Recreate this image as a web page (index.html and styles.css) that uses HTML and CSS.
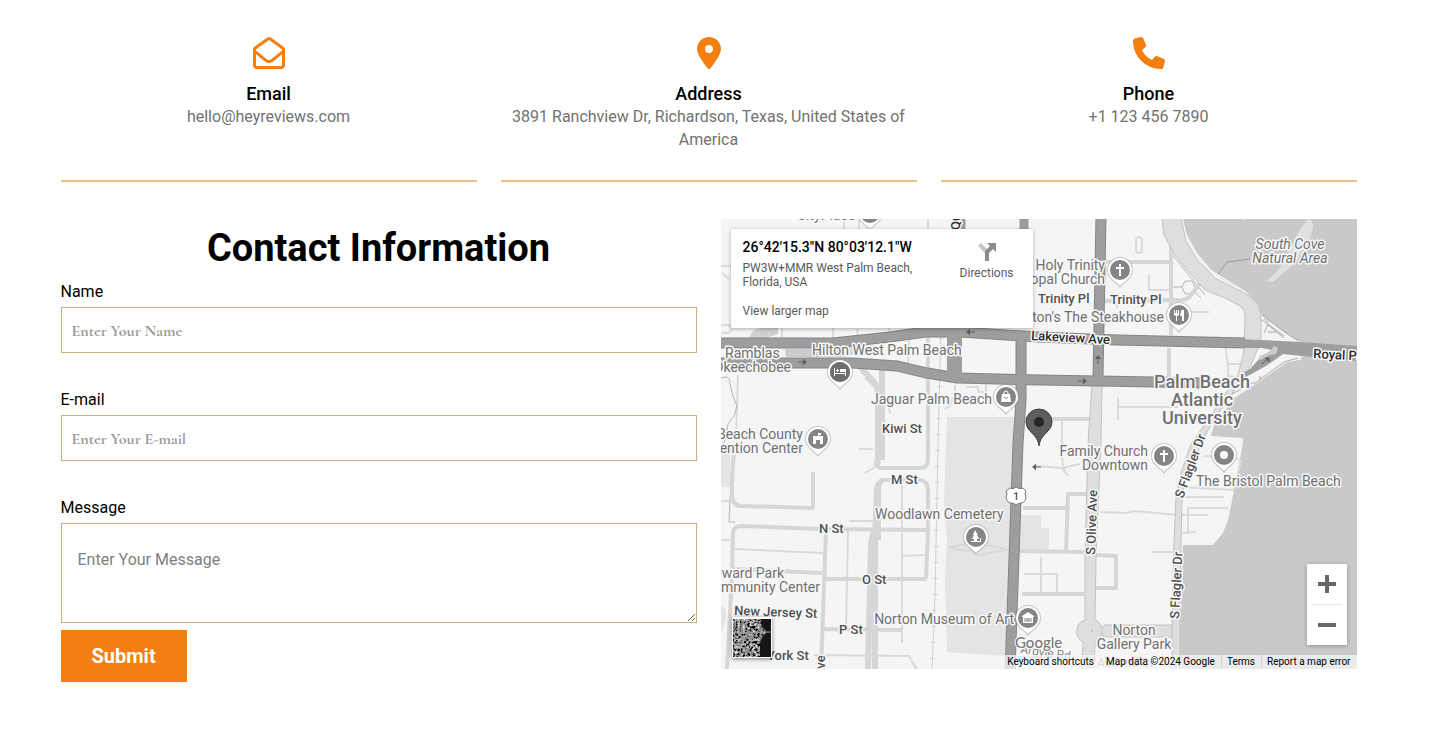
FILE: index.html
```html
<!DOCTYPE html>
<html lang="en">
<head>
<meta charset="utf-8">
<meta name="viewport" content="width=device-width, initial-scale=1">
<title>Contact</title>
<link rel="stylesheet" href="styles.css">
</head>
<body>
<main class="container">
  <section class="info">
    <article class="info-card">
      <svg class="info-icon" viewBox="0 0 512 512" aria-hidden="true"><path d="M255.4 48.2c.2-.1 .4-.2 .6-.2s.4 .1 .6 .2L460.6 194c2.1 1.5 3.4 3.9 3.4 6.5v13.6L291.5 355.7c-20.7 17-50.4 17-71.1 0L48 214.1V200.5c0-2.6 1.2-5 3.4-6.5L255.4 48.2zM48 276.2L190 392.8c38.4 31.5 93.7 31.5 132 0L464 276.2V456c0 4.4-3.6 8-8 8H56c-4.4 0-8-3.6-8-8V276.2zM256 0c-10.2 0-20.2 3.2-28.5 9.1L23.5 154.9C8.7 165.4 0 182.4 0 200.5V456c0 30.9 25.1 56 56 56H456c30.9 0 56-25.1 56-56V200.5c0-18.1-8.7-35.1-23.4-45.6L284.5 9.1C276.2 3.2 266.2 0 256 0z"/></svg>
      <h3>Email</h3>
      <p>hello@heyreviews.com</p>
    </article>
    <article class="info-card">
      <svg class="info-icon" viewBox="-64 0 512 512" aria-hidden="true"><path d="M215.7 499.2C267 435 384 279.4 384 192C384 86 298 0 192 0S0 86 0 192c0 87.4 117 243 168.3 307.2c12.3 15.3 35.1 15.3 47.4 0zM192 128a64 64 0 1 1 0 128 64 64 0 1 1 0-128z"/></svg>
      <h3>Address</h3>
      <p>3891 Ranchview Dr, Richardson, Texas, United States of America</p>
    </article>
    <article class="info-card">
      <svg class="info-icon" viewBox="0 0 512 512" aria-hidden="true"><path d="M164.9 24.6c-7.7-18.6-28-28.5-47.4-23.2l-88 24C12.1 30.2 0 46 0 64C0 311.4 200.6 512 448 512c18 0 33.8-12.1 38.6-29.5l24-88c5.3-19.4-4.6-39.7-23.2-47.4l-96-40c-16.3-6.8-35.2-2.1-46.3 11.6L304.7 368C234.3 334.7 177.3 277.7 144 207.3L193.3 167c13.7-11.2 18.4-30 11.6-46.3l-40-96z"/></svg>
      <h3>Phone</h3>
      <p>+1 123 456 7890</p>
    </article>
  </section>

  <section class="contact">
    <form class="form">
      <h2>Contact Information</h2>
      <div class="field">
        <label for="name">Name</label>
        <input id="name" type="text" placeholder="Enter Your Name">
      </div>
      <div class="field">
        <label for="email">E-mail</label>
        <input id="email" type="email" placeholder="Enter Your E-mail">
      </div>
      <div class="field">
        <label for="message">Message</label>
        <textarea id="message" placeholder="Enter Your Message"></textarea>
      </div>
      <button class="submit" type="submit">Submit</button>
    </form>

    <div class="map">
      <svg class="map-canvas" viewBox="721 219 636 450" preserveAspectRatio="xMidYMid slice" role="img" aria-label="Map of West Palm Beach">
        <defs>
          <g id="pin">
            <path class="pin-shadow" d="M0 18C-3 13-13 9-13 0A13 13 0 0 1 13 0C13 9 3 13 0 18Z"/>
            <path fill="#fff" d="M0 16C-3 12-12 8-12 0A12 12 0 0 1 12 0C12 8 3 12 0 16Z"/>
            <circle r="10" fill="#858585"/>
          </g>
        </defs>
        <rect x="721" y="219" width="636" height="450" fill="#f5f5f5"/>

        <!-- parks and blocks -->
        <g fill="#e4e4e4">
          <path d="M947 417H1016L1014 500 1007 656 947 652 945 580 947 540 944 500Z"/>
          <path d="M721 452H730V487H721ZM721 605q6 2 5 12t-5 14ZM1020 515h8v13h21v22h-30ZM1027 515h14v14h-14Z"/>
          <path fill="#d0d0d0" d="M750 336q2-6 10-8h18v6l-12 4h-16Z"/>
        </g>

        <!-- water -->
        <path fill="#c9c9c9" d="M1181 219L1185 233 1196 255 1208 270 1225 281 1245 293 1256 306 1263 316 1285 333 1301 342 1357 348V219Z"/>
        <path fill="#c9c9c9" d="M1357 346V669H1180L1180 630 1182 593 1183 545H1213L1223 533 1228 520 1235 486 1243 443V438L1211 436 1214 425 1236 396 1256 380 1286 361 1301 357Z"/>
        <path fill="#e0e0e0" d="M1308 219q6 2 5 8l-3 13q-12 20-16 24l-21 18-7-1q14-10 18-21l14-27Z"/>
        <path fill="#e0e0e0" d="M1246 218l-2 3-3-3Z"/>
        <path fill="none" stroke="#f3f3f3" stroke-width="2" d="M1182 219L1186 235 1197 255 1210 270 1227 281 1245 292 1258 306"/>
        <path fill="none" stroke="#999" d="M1218 274L1227 262 1250 259"/>

        <!-- local streets -->
        <g class="street thin">
          <path d="M721 266h11M722 273l7 6M721 325h8q4 4 0 8h-8M782 328v12M833 328v12M857 329l1 8M889 328l1 5M859 219v12M844 219v12M928 219v10M909 337l-1 30M865 378l22 20 3 15"/>
          <path d="M955 385v8M966 387h12v5h8v-9M945 409l5-3 3-9M738 375l-2 60"/>
          <path d="M902 485v158M848 530l-2 100M735 549l88 4M849 521h26M859 449h14M865 473l12-7M902 556l25-1M814 655l95 1q3 7 8 13M721 501h9M721 540h9"/>
          <path d="M1118 398v22M1118 407h60M1117 308v-6h26M1149 275v15h20M1136 241q0-4 3-4t3 4v8q0 4-3 4t-3-4ZM1062 420v30q0 20 4 20M1035 466l27 2 6 8M1062 468l18-4M1100 512l26 1 8-2 45 4M1152 552h23M1185 497h39M1187 508h41M1188 508v24M1182 515h26M1182 533l14-1M1024 574h33v19M1041 557v37M1177 312h32M1226 348l3 32M1228 364h12M1227 376l10 1"/>
          <path d="M1208 288l10-4M1210 340l6-3 5 3M1182 487l52 3M1204 456l30 1 7 4-7 28"/>
        </g>
        <g class="street outline">
          <path d="M732 458L729 522H735M721 378q9-4 9 6 2 12 7 22l-3 10-6 8-2 14-4 8"/>
          <path d="M1173 287h9M1182 287l3-6 7 0 3 6-3 7h-7ZM1194 291l7 7M1171 253l34 42"/>
        </g>
        <g class="street mid">
          <path d="M734 455Q732 470 732 494 732 505 740 506L813 508V472M877 460q-1 8 6 8h38q7 0 7-9V328"/>
          <path d="M1171 219v116M1169 348v32M1104 262h67M1103 301l74-1q10 1 14-5l9-11"/>
          <path d="M727 669L732 575 733 532Q734 526 742 526L819 529 926 530M879 540V484l3-4h38q8 1 8 10v40l-2 49M734 569l88 4M826 529l-5 140M824 579H926M824 629l78 1"/>
          <path d="M1023 508h44M1095 494H1068L1066 550M1018 551l66 1M1096 555l20 1v32h-20M1022 594h62M1024 419h66"/>
        </g>
        <path class="avenue" d="M1104 625h68v12h-68l-4-6Z"/>
        <g class="street wide">
          <path d="M856 362l14 16q8 7 8 16v62q0 5-2 10M882 370v90M875 669V540l2-50q0-6 5-9M868 669l3-125q1-10 6-18"/>
          <path d="M785 352h95M848 348h20"/>
        </g>
        <path fill="none" stroke="#d8d8d8" stroke-width="2" d="M951 547q25-6 57 3-20 2-28 6-4 0-9-6-10 2-20-3Z"/>

        <!-- railway -->
        <path class="rail" d="M941 328L938 444 935 596 932 669"/>
        <path class="rail ties" d="M941 338L938 444 935 596 932 669"/>

        <!-- S Flagler Dr and S Olive Ave -->
        <path class="avenue" d="M1162 218L1164 235 1175 255 1188 271 1205 290 1225 298 1240 306Q1245 309 1245 318L1244 351 1238 375 1218 405 1191 444 1180 476 1176 498 1174 543 1172 630V670H1180V630L1181 543 1182 498 1185 480 1201 444 1213 421 1233 393 1251 365 1261 341V318Q1261 308 1255 301 1250 295 1238 290L1215 278 1198 261 1186 241 1181 218Z"/>
        <path class="avenue" d="M1092 384H1102L1101 443 1096 556 1095 620A12 12 0 0 1 1095 642L1094 670H1082L1083 642A12 12 0 0 1 1085 620L1085 556 1088 443Z"/>
        <circle cx="1092" cy="631" r="1" fill="#bbb"/>

        <!-- bridge ramps -->
        <path fill="#f3f3f3" d="M1262 316L1285 333 1301 343 1285 341H1262Z"/>
        <g fill="none" stroke="#f3f3f3" stroke-width="3">
          <path d="M1301 358l-15 3-27 19-18 12M1292 357l-38 25-19 14"/>
        </g>
        <path fill="none" stroke="#aaa" d="M1262 315l24 18 13 8M1262 320l22 18M1264 333l4-9 16 12M1269 323l-5-4M1268 332h8M1254 384l30-22 14-4M1260 376v4M1232 394l22-12"/>

        <!-- arterial roads -->
        <g class="artery-edge">
          <path d="M721 343H833L890 337 925 332 960 332 1038 337 1118 340 1245 343"/>
          <path d="M721 363H853L897 366 927 373 957 378 1040 380 1155 382 1201 383"/>
          <path d="M1021 332V400L1018 443 1010 672M1101 216L1098 378"/>
        </g>
        <g class="artery">
          <path d="M721 343H833L890 337 925 332 960 332 1038 337 1118 340 1245 343"/>
          <path d="M721 363H853L897 366 927 373 957 378 1040 380 1155 382 1201 383"/>
          <path d="M1021 332V400L1018 443 1010 672M1101 216L1098 378"/>
          <path d="M961 216v14M1024 216v14"/>
        </g>
        <path fill="#9e9e9e" d="M947 330H962V380H947ZM1240 339L1301 342 1357 346V361L1301 356 1283 354 1266 366 1244 378Q1240 380 1243 373L1250 369 1260 358 1272 350 1262 348 1240 348Z"/>
        <path fill="#ccc" d="M1259 356l11-4 4-6 4 2-2 6-6 1-10 5ZM786 349h60v8h-60Z"/>
        <path class="arrows" d="M798 362h8M803 359l3 3-3 3M975 332h-8M970 329l-3 3 3 3M1078 381h8M1083 378l3 3-3 3M1098 364v-8M1095 359l3-3 3 3M1262 364l7-6M1265 358h4v4M1041 467h-8M1036 464l-3 3 3 3"/>
        <path fill="#606060" d="M803 359l4 3-4 3ZM970 329l-4 3 4 3ZM1083 378l4 3-4 3ZM1095 359l3-4 3 4ZM1265 358h4v4ZM1036 464l-4 3 4 3Z"/>

        <!-- street names -->
        <g class="label road">
          <text x="882" y="433">Kiwi St</text>
          <text x="891" y="484">M St</text>
          <text x="819" y="533">N St</text>
          <text x="862" y="584">O St</text>
          <text x="839" y="634">P St</text>
          <text transform="translate(734 615) rotate(2)">New Jersey St</text>
          <text x="767" y="660">York St</text>
          <text x="1038" y="303">Trinity Pl</text>
          <text x="1110" y="304">Trinity Pl</text>
          <text transform="translate(825 677) rotate(-90)">Ave</text>
          <text transform="translate(1095 555) rotate(-88)">S Olive Ave</text>
          <text transform="translate(1179 619) rotate(-87)">S Flagler Dr</text>
          <text transform="translate(1183 499) rotate(-70)">S Flagler Dr</text>
          <text transform="translate(1020 653) rotate(8)" class="faint">Argyle Rd</text>
          <text x="1097" y="667" class="faint">Almond Ct</text>
          <g class="strong">
            <text transform="translate(1031 340) rotate(3)">Lakeview Ave</text>
            <text transform="translate(1313 358) rotate(3)">Royal Park Brg</text>
            <text transform="translate(960 230) rotate(-90)">Quadrille</text>
          </g>
        </g>

        <!-- places -->
        <g class="label place">
          <text x="797" y="220">CityPlace</text>
          <text x="812" y="355">Hilton West Palm Beach</text>
          <text x="725" y="358">Ramblas</text>
          <text x="791" y="372" class="end">Okeechobee</text>
          <text x="992" y="404" class="end">Jaguar Palm Beach</text>
          <text x="803" y="439" class="end">Palm Beach County</text>
          <text x="803" y="453" class="end">Convention Center</text>
          <text x="875" y="519">Woodlawn Cemetery</text>
          <text x="784" y="578" class="end">Howard Park</text>
          <text x="820" y="592" class="end">Community Center</text>
          <text x="1014" y="624" class="end">Norton Museum of Art</text>
          <text x="1105" y="270" class="end">Holy Trinity</text>
          <text x="1105" y="284" class="end">Episcopal Church</text>
          <text x="1164" y="322" class="end">Houston's The Steakhouse</text>
          <text x="1148" y="456" class="end">Family Church</text>
          <text x="1148" y="470" class="end">Downtown</text>
          <text x="1196" y="486">The Bristol Palm Beach</text>
          <text x="1134" y="635" class="mid-text">Norton</text>
          <text x="1134" y="649" class="mid-text">Gallery Park</text>
          <g class="italic">
            <text x="1290" y="249" class="mid-text">South Cove</text>
            <text x="1290" y="263" class="mid-text">Natural Area</text>
          </g>
          <g class="campus">
            <text x="1202" y="388" class="mid-text">Palm Beach</text>
            <text x="1202" y="406" class="mid-text">Atlantic</text>
            <text x="1202" y="424" class="mid-text">University</text>
          </g>
        </g>

        <!-- place pins -->
        <use href="#pin" x="870" y="213"/>
        <g transform="translate(840 372)"><use href="#pin"/><circle r="10" fill="#6e6e6e"/><path fill="#fff" d="M-6-4h1v5H5v-3H0v-1h6v7H5V2H-5v2h-1ZM0-3h5q1 0 1 2v1H0ZM-3-3h1v1h1v1h-1v1h-1v-1h-1v-1h1Z"/></g>
        <g transform="translate(1006 397)"><use href="#pin"/><path fill="none" stroke="#fff" d="M-2-2v-2a2 2 0 0 1 4 0v2"/><path fill="#fff" d="M-4-3h8L5 5H-5Z"/><path d="M-2 0q2 3 4 0" fill="none" stroke="#858585"/></g>
        <g transform="translate(818 439)"><use href="#pin"/><path fill="#fff" d="M0-6h3v2H1v1h4v8H2V1h-4v4h-3v-8h5Z"/></g>
        <g transform="translate(976 537)"><use href="#pin"/><path fill="#fff" d="M-1-7l3 5H1l2 4H1v2h3V1h1v4H-5V4h3V2h-2l2-4h-1Z"/></g>
        <g transform="translate(1028 618)"><use href="#pin"/><path fill="#fff" d="M0-6l6 4v1H5v6H-5v-6h-1v-1Z"/><path fill="none" stroke="#858585" d="M-3 4V0M3 4V0M-1 4V0M1 4V0M-1 2H1"/></g>
        <g transform="translate(1120 270)"><use href="#pin"/><path fill="#fff" d="M-1-6h2v3h3v2H1v7h-2v-7h-3v-2h3Z"/></g>
        <g transform="translate(1179 315)"><use href="#pin"/><path fill="#fff" d="M-5-5h1v3h1v-3h1v3h1v-3h1v5l-2 1v5h-1V1l-2-1ZM2-4q1-2 3-1V6H3V1H1Z"/></g>
        <g transform="translate(1164 456)"><use href="#pin"/><path fill="#fff" d="M-1-6h2v3h3v2H1v7h-2v-7h-3v-2h3Z"/></g>
        <g transform="translate(1224 455)"><use href="#pin"/><circle r="4" fill="#fff"/></g>

        <!-- US-1 shield -->
        <path fill="#fff" stroke="#777" d="M1010 488q3 2 6-1 4 3 7 1l3 3q-2 3 0 6-1 6-5 6-3 0-5 2-2-2-5-2-4 0-5-6 2-3 0-6Z"/>
        <text class="shield" x="1016" y="500">1</text>

        <!-- selected location -->
        <path fill="#5e5e5e" stroke="#404040" d="M1039 446C1038 434 1026 432 1026 422A13 13 0 0 1 1052 422C1052 432 1040 434 1039 446Z"/>
        <circle cx="1039" cy="422" r="5" fill="#262626"/>
        <text class="google" x="1015" y="648">Google</text>
      </svg>

      <div class="place-card">
        <div class="place-info">
          <strong>26°42'15.3"N 80°03'12.1"W</strong>
          <address>PW3W+MMR West Palm Beach, Florida, USA</address>
          <a href="#">View larger map</a>
        </div>
        <a class="directions" href="#">
          <svg viewBox="0 0 20 20" aria-hidden="true"><path fill="#c6c6c6" d="M1 4L4 1 11 8V13L9 12Z"/><path fill="#8c8c8c" d="M8 19V11Q8 9 9 8L13 4 10 1H19V10L16 7 12 11V19Z"/></svg>
          Directions
        </a>
      </div>

      <button class="satellite" type="button" aria-label="Show satellite imagery">
        <svg viewBox="0 0 38 38" aria-hidden="true">
          <filter id="grain" x="0" y="0" width="100%" height="100%">
            <feTurbulence type="fractalNoise" baseFrequency=".4" numOctaves="4" seed="6"/>
            <feColorMatrix values="1.400 .8 0 0 -.85  1.400 .8 0 0 -.85  1.400 .8 0 0 -.85  0 0 0 0 1"/>
          </filter>
          <rect width="38" height="38" filter="url(#grain)"/>
          <path fill="#151515" d="M28 0L29 8 34 13 29 18 27 24V38H38V0Z"/>
          <path fill="none" stroke="#999" d="M0 14l38-1M9 0L7 38"/>
        </svg>
      </button>

      <div class="zoom">
        <button type="button" aria-label="Zoom in"><svg viewBox="0 0 18 18"><path d="M7 0h4v7h7v4h-7v7H7v-7H0V7h7Z"/></svg></button>
        <button type="button" aria-label="Zoom out"><svg viewBox="0 0 18 18"><path d="M0 7h18v4H0Z"/></svg></button>
      </div>

      <div class="credits">
        <button type="button">Keyboard shortcuts</button>
        <span>Map data ©2024 Google</span>
        <a href="#">Terms</a>
        <a href="#">Report a map error</a>
      </div>
    </div>
  </section>
</main>
</body>
</html>
```

FILE: styles.css
```css
* { box-sizing: border-box; }

body {
  margin: 0;
  padding: 37px 37px 52px 24px;
  background: #fff;
  color: #000;
  font: 16px/23px Roboto, sans-serif;
}

h2, h3, p { margin: 0; }
a { color: inherit; text-decoration: none; }
button { font-family: inherit; border: 0; padding: 0; cursor: pointer; }

.container { max-width: 1296px; margin: 0 auto; }

/* contact details */
.info {
  display: grid;
  grid-template-columns: repeat(3, 1fr);
  gap: 24px;
  margin-bottom: 37px;
}
.info-card {
  display: flex;
  flex-direction: column;
  align-items: center;
  padding-bottom: 29px;
  border-bottom: 2px solid #f8be8a;
  text-align: center;
}
.info-icon { width: 32px; height: 32px; margin-bottom: 13px; fill: #f47f10; }
.info-card h3 { font-size: 18px; font-weight: 500; }
.info-card p { color: #727272; padding: 0 8px; }

/* form and map */
.contact {
  display: grid;
  grid-template-columns: 1fr 1fr;
  gap: 24px;
  align-items: start;
}
.form { display: flex; flex-direction: column; }
.form h2 { margin-bottom: 2px; font-size: 38px; font-weight: 700; line-height: 59px; text-align: center; }
.field { display: flex; flex-direction: column; gap: 4px; margin-bottom: 35px; }
.field:last-of-type { margin-bottom: 7px; }
.field input, .field textarea {
  width: 100%;
  border: 1px solid #c8ae7d;
  border-radius: 0;
  background: #fff;
  outline: 0;
}
.field input {
  height: 46px;
  padding: 2px 10px 0;
  font: bold 16px "Cormorant Garamond", "Liberation Serif", serif;
}
.field input::placeholder { color: #999; }
.field textarea { height: 100px; padding: 24px 16px; font: 16px/23px Roboto, sans-serif; resize: vertical; }
.field textarea::placeholder { color: #808080; }
.submit {
  align-self: flex-start;
  padding: 14px 31px;
  background: #f47f10;
  color: #fff;
  font-size: 20px;
  font-weight: 700;
  line-height: 24px;
}

.map { position: relative; height: 450px; overflow: hidden; background: #f5f5f5; }
.map-canvas { display: block; width: 100%; height: 100%; }

.street { fill: none; stroke: #d6d6d6; stroke-linejoin: round; }
.thin { stroke: #dadada; stroke-width: 2; }
.outline { stroke: #b5b5b5; stroke-width: 1; }
.mid { stroke-width: 4; }
.wide { stroke-width: 6; }
.rail { fill: none; stroke: #d0d0d0; stroke-width: 1; }
.ties { stroke-width: 5; stroke-dasharray: 1 15; }
.avenue { fill: #dedede; stroke: #c2c2c2; stroke-width: 1; }
.artery-edge { fill: none; stroke: #858585; stroke-width: 11; }
.artery { fill: none; stroke: #9e9e9e; stroke-width: 9; }
.arrows { fill: none; stroke: #606060; stroke-width: 1; }

.label { paint-order: stroke; stroke: #f8f8f8; stroke-width: 3px; stroke-linejoin: round; font-family: Roboto, sans-serif; }
.road { fill: #505050; font-size: 13px; font-weight: 500; }
.strong { fill: #2c2c2c; }
.faint { fill: #8a8a8a; font-size: 12px; font-weight: 400; }
.place { fill: #707070; font-size: 14px; }
.campus { font-size: 18px; font-weight: 500; }
.italic { font-style: italic; }
.end { text-anchor: end; }
.mid-text { text-anchor: middle; }
.shield { fill: #444; font: 500 10px Roboto, sans-serif; text-anchor: middle; }
.google { fill: #777; stroke: #fff; stroke-width: 2px; paint-order: stroke; font: 500 15px Lato, sans-serif; }
.pin-shadow { fill: #999; opacity: .5; }

.place-card {
  position: absolute;
  top: 10px;
  left: 10px;
  display: flex;
  justify-content: space-between;
  width: 302px;
  height: 99px;
  padding: 10px 19px 9px 12px;
  background: #fff;
  box-shadow: 0 1px 4px rgba(0, 0, 0, .3);
  color: #5b5b5b;
  font-size: 12px;
  line-height: 14px;
}
.place-info { display: flex; flex-direction: column; width: 190px; }
.place-info strong { margin-bottom: 5px; color: #000; font-size: 14px; font-weight: 500; line-height: 17px; }
.place-info address { margin-bottom: 15px; font-style: normal; }
.directions { display: flex; flex-direction: column; align-items: center; gap: 4px; padding-top: 3px; }
.directions svg { width: 20px; height: 20px; }

.satellite {
  position: absolute;
  bottom: 11px;
  left: 11px;
  width: 40px;
  height: 41px;
  border: 1px solid #fff;
  background: #fff;
  box-shadow: 0 1px 4px rgba(0, 0, 0, .5);
}
.satellite svg { display: block; width: 38px; height: 38px; }

.zoom {
  position: absolute;
  right: 10px;
  bottom: 24px;
  width: 40px;
  padding: 0 5px;
  background: #fff;
  box-shadow: 0 1px 4px rgba(0, 0, 0, .3);
}
.zoom button { display: grid; place-items: center; width: 100%; height: 40px; background: #fff; }
.zoom button + button { height: 41px; border-top: 1px solid #e6e6e6; }
.zoom svg { width: 18px; height: 18px; fill: #666; }

.credits {
  position: absolute;
  right: 0;
  bottom: 0;
  display: flex;
  background: rgba(245, 245, 245, .75);
  font-size: 10px;
  line-height: 14px;
}
.credits > * { padding: 0 6px; background: none; color: #000; font-size: 10px; line-height: 14px; }
.credits a { box-shadow: inset 1px 0 #d2d2d2; }

@media (max-width: 800px) {
  .info, .contact { grid-template-columns: 1fr; }
}
```
